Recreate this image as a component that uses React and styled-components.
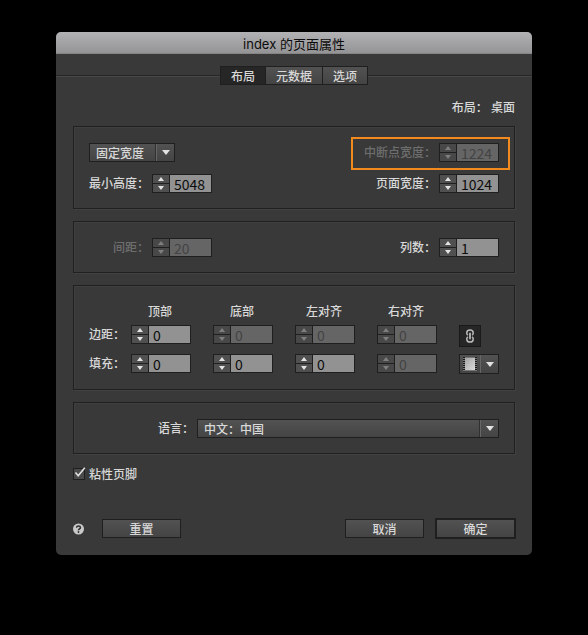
import React, { useState } from "react";
import styled, { createGlobalStyle, css } from "styled-components";

const Global = createGlobalStyle`
  * { box-sizing: border-box; }
  body {
    margin: 0;
    background: #000;
    color: #d8d8d8;
    font: 500 12px/20px "Liberation Sans", "Noto Sans CJK SC", sans-serif;
  }
  button, input, select { font: inherit; color: inherit; margin: 0; }
`;

const raised = css`
  background: linear-gradient(#525252, #444);
  border: 1px solid #1f1f1f;
  border-radius: 0;
`;

const Page = styled.div`
  min-height: 100vh;
  padding: 32px 56px;
`;

const Dialog = styled.main`
  background: #393939;
  border-radius: 5px;
  overflow: hidden;
`;

const TitleBar = styled.h1`
  margin: 0;
  height: 22px;
  background: linear-gradient(#b2b1b3, #949395);
  border-bottom: 1px solid #858585;
  color: #0c0c0c;
  font-family: Inter, "Noto Sans CJK SC", sans-serif;
  font-size: 13px;
  font-weight: 400;
  line-height: 24px;
  text-align: center;
`;

const TabBar = styled.div`
  display: flex;
  align-items: center;
  margin-top: 12px;
`;

const Rule = styled.div`
  flex: 1;
  height: 2px;
  background: #484848;
  border-top: 1px solid #262626;
  &:first-child { margin-right: 4px; }
`;

const Tabs = styled.div`
  display: flex;
  &:nth-child(2) { margin-left: -4px; }
`;

const Tab = styled.button`
  ${raised}
  height: 19px;
  padding: 2px 10px 0;
  line-height: 17px;
  & + & { margin-left: -1px; }
  &[aria-selected="true"] { background: #262626; }
`;

const Content = styled.div`
  display: flex;
  flex-direction: column;
  gap: 12px;
  padding: 13px 17px 16px;
`;

const Status = styled.div`
  margin-bottom: -4px;
  text-align: right;
  white-space: pre;
`;

const Panel = styled.section`
  display: flex;
  flex-direction: column;
  gap: 12px;
  padding: 16px 15px 15px;
  border: 1px solid #202020;
  box-shadow: 1px 1px 0 #414141, inset 1px 1px 0 #3f3f3f;
`;

const Line = styled.div`
  display: flex;
  align-items: center;
  justify-content: space-between;
  height: 19px;
`;

const Field = styled.div`
  position: relative;
  display: flex;
  align-items: center;
  justify-content: flex-end;
  gap: 3px;
  min-width: ${(p) => (p.$lead ? "123px" : "0")};
  flex: ${(p) => (p.$grow ? "1" : "none")};
  color: ${(p) => (p.$dim ? "#6e6e6e" : "inherit")};
  ${(p) =>
    p.$marked &&
    css`
      &::after {
        content: "";
        position: absolute;
        inset: -6px -11px -8px -13px;
        border: 2px solid #f28a1e;
        pointer-events: none;
      }
    `}
`;

const FieldLabel = styled.label`
  padding-top: 2px;
  line-height: 17px;
`;

const Stepper = styled.div`
  display: grid;
  grid-template-columns: 17px 1fr;
  width: 60px;
  height: 19px;
  border: 1px solid #1f1f1f;
  background: #1f1f1f;
`;

const Steps = styled.div`
  display: grid;
  grid-template-rows: 8px 8px;
  gap: 1px;
  border-right: 1px solid #1f1f1f;
`;

const Step = styled.button`
  display: flex;
  align-items: center;
  justify-content: center;
  padding: 0;
  border: 0;
  background: #505050;
  color: #e4e4e4;
  &:disabled { background: #484848; color: #7e7e7e; }
`;

const NumberBox = styled.input`
  width: 100%;
  min-width: 0;
  height: 17px;
  padding: 1px 0 0 4px;
  border: 0;
  background: #929292;
  color: #0d0d0d;
  font: 400 14px/16px "Noto Sans CJK SC", sans-serif;
  &:disabled { background: #656565; color: #434343; }
`;

const SelectWrap = styled.div`
  position: relative;
  flex: ${(p) => (p.$grow ? "1" : "none")};
  max-width: ${(p) => (p.$grow ? "302px" : "none")};
  width: ${(p) => (p.$grow ? "auto" : "86px")};
`;

const Select = styled.select`
  ${raised}
  display: block;
  appearance: none;
  width: 100%;
  height: 19px;
  padding: 2px 20px 0 6px;
  line-height: 17px;
`;

const SelectMark = styled.span`
  position: absolute;
  top: 1px;
  right: 1px;
  bottom: 1px;
  width: 18px;
  display: flex;
  align-items: center;
  justify-content: center;
  border-left: 1px solid #666;
  box-shadow: -1px 0 0 #303030;
  pointer-events: none;
`;

const Matrix = styled.div`
  display: grid;
  grid-template-columns: 42px repeat(4, 1fr) 40px;
  grid-template-rows: 16px 22px 20px;
  row-gap: 7px;
`;

const ColumnHead = styled.div`
  width: 58px;
  text-align: center;
`;

const RowHead = styled.div`
  line-height: 21px;
`;

const LinkToggle = styled.button`
  display: flex;
  align-items: center;
  justify-content: center;
  width: 22px;
  height: 22px;
  padding: 0;
  border: 1px solid #1a1a1a;
  background: #262626;
`;

const ModeButton = styled.button`
  ${raised}
  display: grid;
  grid-template-columns: 20px 18px;
  align-items: center;
  justify-items: center;
  width: 40px;
  height: 20px;
  padding: 0;
`;

const ModeArrow = styled.span`
  display: flex;
  align-items: center;
  justify-content: center;
  width: 18px;
  height: 18px;
  border-left: 1px solid #666;
`;

const CheckLabel = styled.label`
  align-self: flex-start;
  display: flex;
  align-items: center;
  gap: 4px;
  height: 16px;
`;

const CheckText = styled.span`
  padding-top: 2px;
`;

const CheckWrap = styled.span`
  position: relative;
  display: flex;
`;

const CheckInput = styled.input`
  appearance: none;
  width: 12px;
  height: 12px;
  border: 1px solid #1f1f1f;
  background: #4a4a4a;
  &:not(:checked) + svg { display: none; }
`;

const CheckMark = styled.svg`
  position: absolute;
  top: -1px;
  left: 0;
  pointer-events: none;
`;

const Footer = styled.footer`
  display: flex;
  align-items: center;
  gap: 11px;
  margin: 24px -1px 0 0;
`;

const HelpButton = styled.button`
  display: flex;
  margin-right: 7px;
  padding: 0;
  border: 0;
  background: none;
`;

const PushButton = styled.button`
  ${raised}
  width: ${(p) => (p.$primary ? "81px" : "79px")};
  height: ${(p) => (p.$primary ? "21px" : "19px")};
  border-width: ${(p) => (p.$primary ? "2px" : "1px")};
  padding: 2px 0 0;
  line-height: 17px;
`;

const Spacer = styled.div`
  flex: 1;
`;

function Triangle({ up }) {
  return (
    <svg width="6" height="4" viewBox="0 0 6 4" aria-hidden="true">
      <path d={up ? "M0 4 3 0 6 4Z" : "M0 0H6L3 4Z"} fill="currentColor" />
    </svg>
  );
}

function Arrow() {
  return (
    <svg width="8" height="5" viewBox="0 0 8 5" aria-hidden="true">
      <path d="M0 0H8L4 5Z" fill="#e2e2e2" />
    </svg>
  );
}

function Spinner({ id, label, initial, disabled }) {
  const [value, setValue] = useState(initial);
  const move = (d) => setValue((v) => String(Math.max(0, Number(v) + d)));
  return (
    <Stepper>
      <Steps>
        <Step type="button" aria-label={label + " +"} disabled={disabled} onClick={() => move(1)}>
          <Triangle up />
        </Step>
        <Step type="button" aria-label={label + " −"} disabled={disabled} onClick={() => move(-1)}>
          <Triangle />
        </Step>
      </Steps>
      <NumberBox
        id={id}
        aria-label={label}
        inputMode="numeric"
        value={value}
        disabled={disabled}
        onChange={(e) => setValue(e.target.value)}
      />
    </Stepper>
  );
}

function NumberField({ id, label, value, disabled, lead, marked }) {
  return (
    <Field $lead={lead} $dim={disabled} $marked={marked}>
      <FieldLabel htmlFor={id}>{label}：</FieldLabel>
      <Spinner id={id} label={label} initial={value} disabled={disabled} />
    </Field>
  );
}

function Dropdown({ id, label, option, grow }) {
  return (
    <SelectWrap $grow={grow}>
      <Select id={id} aria-label={label}>
        <option>{option}</option>
      </Select>
      <SelectMark>
        <Arrow />
      </SelectMark>
    </SelectWrap>
  );
}

const sides = ["顶部", "底部", "左对齐", "右对齐"];
const boxRows = [
  { name: "边距", enabled: [true, false, false, false] },
  { name: "填充", enabled: [true, true, true, false] },
];

function LinkIcon() {
  return (
    <svg width="10" height="14" viewBox="0 0 10 14" fill="none" stroke="#b9b9b9" strokeWidth="1.5" aria-hidden="true">
      <path d="M3 6.2Q1.8 5.6 1.8 4.2V3.8Q1.8 .9 5 .9T8.2 3.8V4.2Q8.2 5.6 7 6.2" />
      <path d="M3 7.8Q1.8 8.4 1.8 9.8V10.2Q1.8 13.1 5 13.1T8.2 10.2V9.8Q8.2 8.4 7 7.8" />
      <path d="M5 4.5V9.5" strokeWidth="1.8" strokeLinecap="round" />
    </svg>
  );
}

function FilmIcon() {
  return (
    <svg width="14" height="14" viewBox="0 0 14 14" aria-hidden="true">
      <defs>
        <linearGradient id="film" x1="0" y1="0" x2="1" y2="1">
          <stop offset="0" stopColor="#a4a4a4" />
          <stop offset="1" stopColor="#dcdcdc" />
        </linearGradient>
      </defs>
      <rect width="14" height="14" fill="#777" />
      <rect x="2" y="1" width="10" height="12" fill="url(#film)" />
      <path d="M1 0V14M13 0V14" stroke="#181818" strokeWidth="2" strokeDasharray="1 1" />
    </svg>
  );
}

export default function App() {
  const [tab, setTab] = useState("布局");
  const [linked, setLinked] = useState(true);
  return (
    <Page>
      <Global />
      <Dialog role="dialog" aria-labelledby="title">
        <TitleBar id="title">index 的页面属性</TitleBar>
        <TabBar>
          <Rule />
          <Tabs role="tablist">
            {["布局", "元数据", "选项"].map((t) => (
              <Tab key={t} type="button" role="tab" aria-selected={t === tab} onClick={() => setTab(t)}>
                {t}
              </Tab>
            ))}
          </Tabs>
          <Rule />
        </TabBar>
        <Content>
          <Status>布局： 桌面</Status>
          <Panel>
            <Line>
              <Dropdown id="width-mode" label="宽度" option="固定宽度" />
              <NumberField id="breakpoint" label="中断点宽度" value="1224" disabled marked />
            </Line>
            <Line>
              <NumberField id="min-height" label="最小高度" value="5048" lead />
              <NumberField id="page-width" label="页面宽度" value="1024" />
            </Line>
          </Panel>
          <Panel>
            <Line>
              <NumberField id="gutter" label="间距" value="20" disabled lead />
              <NumberField id="columns" label="列数" value="1" />
            </Line>
          </Panel>
          <Panel>
            <Matrix>
              <span />
              {sides.map((s) => (
                <ColumnHead key={s}>{s}</ColumnHead>
              ))}
              <span />
              {boxRows.map((row, i) => (
                <React.Fragment key={row.name}>
                  <RowHead>{row.name}：</RowHead>
                  {sides.map((s, j) => (
                    <Spinner key={s} label={row.name + s} initial="0" disabled={!row.enabled[j]} />
                  ))}
                  {i === 0 ? (
                    <LinkToggle type="button" aria-label="链接" aria-pressed={linked} onClick={() => setLinked(!linked)}>
                      <LinkIcon />
                    </LinkToggle>
                  ) : (
                    <ModeButton type="button" aria-label="填充方式">
                      <FilmIcon />
                      <ModeArrow>
                        <Arrow />
                      </ModeArrow>
                    </ModeButton>
                  )}
                </React.Fragment>
              ))}
            </Matrix>
          </Panel>
          <Panel>
            <Line>
              <Field $grow>
                <FieldLabel htmlFor="language">语言：</FieldLabel>
                <Dropdown id="language" label="语言" option="中文：中国" grow />
              </Field>
            </Line>
          </Panel>
          <CheckLabel>
            <CheckWrap>
              <CheckInput type="checkbox" defaultChecked />
              <CheckMark width="13" height="12" viewBox="0 0 13 12" aria-hidden="true">
                <path d="M2.5 5.5 5.2 8.8 11.8 .8" fill="none" stroke="#e0e0e0" strokeWidth="1.6" />
              </CheckMark>
            </CheckWrap>
            <CheckText>粘性页脚</CheckText>
          </CheckLabel>
          <Footer>
            <HelpButton type="button" aria-label="帮助">
              <svg width="11" height="12" viewBox="0 0 11 12" aria-hidden="true">
                <circle cx="5.5" cy="6" r="5.5" fill="#c9c9c9" />
                <path d="M3.5 4.7Q3.6 3 5.5 3T7.5 4.6Q7.5 5.4 6.4 6T5.5 7.4" fill="none" stroke="#303030" strokeWidth="1.5" />
                <circle cx="5.5" cy="9" r="0.9" fill="#303030" />
              </svg>
            </HelpButton>
            <PushButton type="button">重置</PushButton>
            <Spacer />
            <PushButton type="button">取消</PushButton>
            <PushButton type="submit" $primary>
              确定
            </PushButton>
          </Footer>
        </Content>
      </Dialog>
    </Page>
  );
}
